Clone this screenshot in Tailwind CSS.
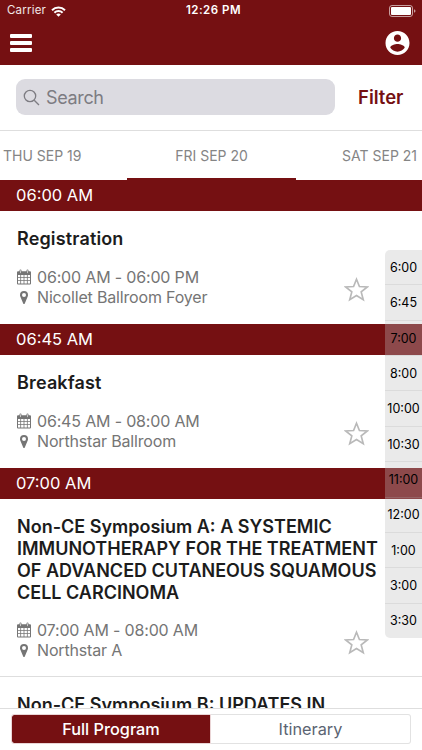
<!DOCTYPE html>
<html lang="en">
<head>
    <meta charset="UTF-8">
    <meta name="viewport" content="width=device-width, initial-scale=1.0">
    <title>Program</title>
    <script src="https://cdn.jsdelivr.net/npm/@tailwindcss/browser@4"></script>
</head>
<body class="bg-white font-['Inter',sans-serif] antialiased">
    <!-- Shared icons -->
    <svg class="hidden">
        <symbol id="icon-calendar" viewBox="0 0 14 16">
            <path fill="currentColor" fill-rule="evenodd" d="M1 2.200h1.500V1.500Q2.500.5 3.500.5t1 1v.7h5v-.7q0-1 1-1t1 1v.7H13q1 0 1 1V14.500q0 1-1 1H1q-1 0-1-1V3.200q0-1 1-1zM1 6v2.300h2.300V6zM4.100 6v2.300h2.500V6zM7.400 6v2.300h2.500V6zM10.700 6v2.300H13V6zM1 9.100v2.200h2.300V9.100zM4.100 9.100v2.200h2.500V9.100zM7.400 9.100v2.200h2.500V9.100zM10.700 9.100v2.200H13V9.100zM1 12.100v2.400h2.300v-2.400zM4.100 12.100v2.400h2.500v-2.400zM7.400 12.100v2.400h2.500v-2.400zM10.700 12.100v2.400H13v-2.400z"/>
            <path fill="none" stroke="#fff" stroke-width=".6" d="M3.500 1.300v2.800M10.500 1.300v2.800"/>
        </symbol>
        <symbol id="icon-pin" viewBox="0 0 8 13">
            <path fill="currentColor" fill-rule="evenodd" d="M4 0a4 4 0 0 1 4 4c0 .8-.1 1.300-.4 1.800L4.800 12.400c-.3.700-1.300.7-1.600 0L.4 5.800C.1 5.300 0 4.800 0 4a4 4 0 0 1 4-4zm0 2a2 2 0 1 0 0 4 2 2 0 0 0 0-4z"/>
        </symbol>
        <symbol id="icon-star" viewBox="0 0 24 24">
            <path fill="none" stroke="#b9b9b9" stroke-width="1.600" d="M12 2.200l2.800 6.900 7.600.5-5.900 4.700 2 7.500-6.500-4.100-6.500 4.100 2-7.500-5.900-4.700 7.600-.5z"/>
        </symbol>
    </svg>

    <div class="relative flex h-[750px] w-[422px] flex-col overflow-hidden">
        <!-- Status bar and navigation -->
        <header class="h-[65px] shrink-0 bg-[#751012] text-white">
            <div class="grid h-[22px] grid-cols-3 items-center pr-[6px] pl-[7px] text-[11.500px]">
                <div class="flex items-center gap-[5px]">
                    <span class="tracking-[0.2px] text-white/90">Carrier</span>
                    <svg class="h-[11px] w-[15px]" viewBox="0 0 15 11" fill="none" stroke="currentColor" stroke-width="2">
                        <path d="M1 4.200a9.300 9.300 0 0 1 13 0M3.400 6.800a5.800 5.800 0 0 1 8.200 0"/>
                        <path d="M7.500 10.800L5.200 8.500a3.300 3.300 0 0 1 4.600 0z" fill="currentColor" stroke="none"/>
                    </svg>
                </div>
                <span class="pl-[4px] text-center font-semibold tracking-[0.5px]">12:26 PM</span>
                <svg class="h-[12px] w-[27px] justify-self-end" viewBox="0 0 27 12">
                    <rect x=".5" y=".5" width="23" height="11" rx="2.500" fill="none" stroke="#fff" stroke-opacity=".6"/>
                    <rect x="2" y="2" width="20" height="8" rx="1" fill="#fff"/>
                    <path d="M25 4.200q1.500.6 1.500 1.800T25 7.800z" fill="#fff" fill-opacity=".6"/>
                </svg>
            </div>
            <div class="flex h-[42px] items-center justify-between pr-[12px] pl-[10px]">
                <svg class="h-[20px] w-[22px]" viewBox="0 0 22 20" fill="#fff">
                    <rect y="1" width="22" height="4" rx="1"/>
                    <rect y="8" width="22" height="4" rx="1"/>
                    <rect y="15" width="22" height="4" rx="1"/>
                </svg>
                <svg class="h-[24px] w-[25px]" viewBox="2 2 20 20" fill="#fff">
                    <path d="M12 2C6.480 2 2 6.480 2 12s4.480 10 10 10 10-4.480 10-10S17.520 2 12 2zm0 3c1.660 0 3 1.340 3 3s-1.340 3-3 3-3-1.340-3-3 1.340-3 3-3zm0 14.200c-2.500 0-4.710-1.280-6-3.220.03-1.990 4-3.080 6-3.080 1.990 0 5.970 1.090 6 3.080-1.290 1.940-3.500 3.220-6 3.220z"/>
                </svg>
            </div>
        </header>

        <!-- Search -->
        <div class="flex h-[66px] shrink-0 items-center border-b border-[#dedede] pl-[16px]">
            <div class="mb-px flex h-[36px] w-[319px] items-center gap-[6px] rounded-[9px] bg-[#dcdbe1] pl-[7px] text-[#7d7c82]">
                <svg class="h-[17px] w-[17px]" viewBox="0 0 17 17" fill="none" stroke="currentColor" stroke-width="1.300">
                    <circle cx="7" cy="7" r="5.700"/>
                    <path d="M11.200 11.200l4.800 4.800"/>
                </svg>
                <span class="text-[18px] tracking-[-0.35px]">Search</span>
            </div>
            <span class="ml-[23px] text-[18.500px] font-semibold text-[#751012]">Filter</span>
        </div>

        <!-- Days -->
        <nav class="flex h-[49px] shrink-0 justify-between text-[14px] text-[#858585]">
            <div class="flex w-[127px] items-center pl-[3px]">THU SEP 19</div>
            <div class="flex w-[169px] items-center justify-center border-b-2 border-[#751012] pt-[2px]">FRI SEP 20</div>
            <div class="flex w-[126px] items-center justify-end pr-[5px]">SAT SEP 21</div>
        </nav>

        <!-- Sessions -->
        <main class="min-h-0 flex-1 overflow-hidden text-[#1c1c1c]">
            <h2 class="flex h-[31px] items-center bg-[#751012] pl-[16px] text-[16.500px] text-white">06:00 AM</h2>
            <section class="flex h-[113px] flex-col px-[17px] pt-[17px]">
                <h3 class="text-[18px] leading-[22px] font-semibold tracking-[0.15px]">Registration</h3>
                <div class="mt-[17px] flex justify-between text-[16px] leading-[20px] tracking-[-0.17px] text-[#757575]">
                    <div>
                        <div class="flex items-center"><svg class="mr-[6px] h-[16px] w-[14px]"><use href="#icon-calendar"/></svg><span>06:00 AM - 06:00 PM</span></div>
                        <div class="flex items-center"><svg class="mr-[9px] ml-[3px] h-[13px] w-[8px]"><use href="#icon-pin"/></svg><span>Nicollet Ballroom Foyer</span></div>
                    </div>
                    <svg class="mt-[10px] mr-[36px] h-[25px] w-[25px]"><use href="#icon-star"/></svg>
                </div>
            </section>

            <h2 class="flex h-[31px] items-center bg-[#751012] pl-[16px] text-[16.500px] text-white">06:45 AM</h2>
            <section class="flex h-[113px] flex-col px-[17px] pt-[17px]">
                <h3 class="text-[18px] leading-[22px] font-semibold tracking-[0.15px]">Breakfast</h3>
                <div class="mt-[17px] flex justify-between text-[16px] leading-[20px] tracking-[-0.17px] text-[#757575]">
                    <div>
                        <div class="flex items-center"><svg class="mr-[6px] h-[16px] w-[14px]"><use href="#icon-calendar"/></svg><span>06:45 AM - 08:00 AM</span></div>
                        <div class="flex items-center"><svg class="mr-[9px] ml-[3px] h-[13px] w-[8px]"><use href="#icon-pin"/></svg><span>Northstar Ballroom</span></div>
                    </div>
                    <svg class="mt-[10px] mr-[36px] h-[25px] w-[25px]"><use href="#icon-star"/></svg>
                </div>
            </section>

            <h2 class="flex h-[31px] items-center bg-[#751012] pl-[16px] text-[16.500px] text-white">07:00 AM</h2>
            <section class="flex h-[178px] flex-col border-b border-[#dedede] px-[17px] pt-[17px]">
                <h3 class="text-[18px] leading-[22px] font-semibold whitespace-nowrap">Non-CE Symposium A: A SYSTEMIC<br>IMMUNOTHERAPY FOR THE TREATMENT<br>OF ADVANCED CUTANEOUS SQUAMOUS<br>CELL CARCINOMA</h3>
                <div class="mt-[16px] flex justify-between text-[16px] leading-[20px] tracking-[-0.17px] text-[#757575]">
                    <div>
                        <div class="flex items-center"><svg class="mr-[6px] h-[16px] w-[14px]"><use href="#icon-calendar"/></svg><span>07:00 AM - 08:00 AM</span></div>
                        <div class="flex items-center"><svg class="mr-[9px] ml-[3px] h-[13px] w-[8px]"><use href="#icon-pin"/></svg><span>Northstar A</span></div>
                    </div>
                    <svg class="mt-[10px] mr-[36px] h-[25px] w-[25px]"><use href="#icon-star"/></svg>
                </div>
            </section>
            <section class="px-[17px] pt-[17px]">
                <h3 class="text-[18px] leading-[22px] font-semibold whitespace-nowrap">Non-CE Symposium B: UPDATES IN</h3>
            </section>
        </main>

        <!-- Program / itinerary switch -->
        <footer class="flex h-[42px] shrink-0 border-t border-[#dedede] bg-white px-[11px] pt-[5px] text-[16.300px]">
            <div class="flex h-[30px] w-[200px] items-center justify-center rounded-l-[3px] border border-[#ead5d6] bg-[#751012] bg-clip-padding font-medium text-white">Full Program</div>
            <div class="flex h-[30px] w-[200px] items-center justify-center rounded-r-[3px] border border-l-0 border-[#e2e2e2] text-[#5b6472]">Itinerary</div>
        </footer>

        <!-- Jump to time -->
        <div class="absolute top-[250px] right-0 flex h-[388px] w-[37px] flex-col divide-y divide-[#b0b0b0]/25 rounded-l-[5px] bg-[#c0c0c0]/33 text-[12.500px] text-black">
            <div class="flex flex-1 items-center justify-center pt-[2px]">6:00</div>
            <div class="flex flex-1 items-center justify-center pt-[2px]">6:45</div>
            <div class="flex flex-1 items-center justify-center pt-[2px]">7:00</div>
            <div class="flex flex-1 items-center justify-center pt-[2px]">8:00</div>
            <div class="flex flex-1 items-center justify-center pt-[2px]">10:00</div>
            <div class="flex flex-1 items-center justify-center pt-[2px]">10:30</div>
            <div class="flex flex-1 items-center justify-center pt-[2px]">11:00</div>
            <div class="flex flex-1 items-center justify-center pt-[2px]">12:00</div>
            <div class="flex flex-1 items-center justify-center pt-[2px]">1:00</div>
            <div class="flex flex-1 items-center justify-center pt-[2px]">3:00</div>
            <div class="flex flex-1 items-center justify-center pt-[2px]">3:30</div>
        </div>
    </div>
</body>
</html>
